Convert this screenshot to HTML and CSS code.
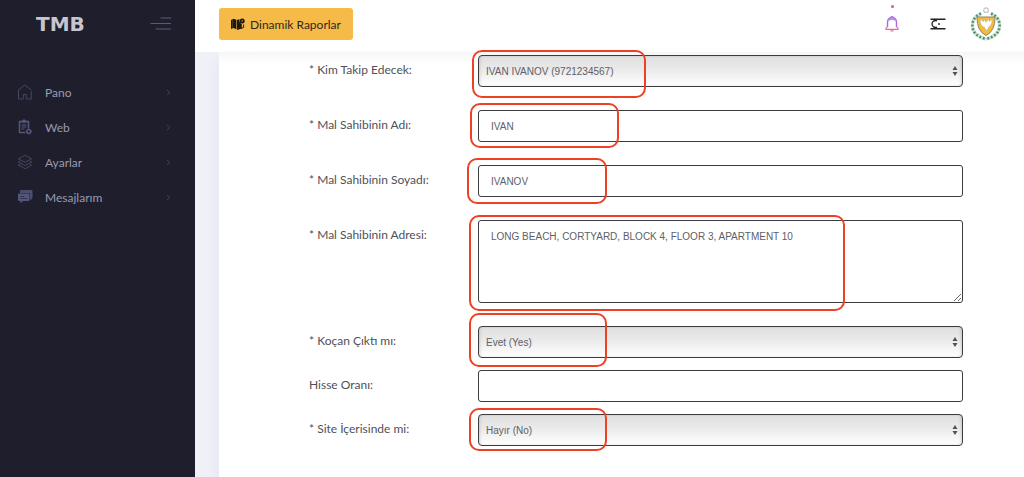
FILE: index.html
```html
<!DOCTYPE html>
<html lang="tr">
<head>
<meta charset="utf-8">
<meta name="viewport" content="width=device-width, initial-scale=1">
<title>TMB</title>
<link rel="stylesheet" href="styles.css">
</head>
<body>
<div class="app">
  <aside class="sidebar">
    <div class="brand">
      <a class="logo" href="#">TMB</a>
      <button class="toggle" type="button" aria-label="Menü">
        <svg width="22" height="14" viewBox="0 0 22 14" fill="none" stroke="#4a4a63" stroke-width="1.4"><path d="M10.500 1H21"/><path d="M.5 6.500H21" stroke="#5a5a74" stroke-width="1"/><path d="M5.500 12H21"/></svg>
      </button>
    </div>
    <nav class="nav">
      <a class="nav-item" href="#">
        <svg class="nav-icon" viewBox="0 0 16 16" fill="none" stroke="#45465f" stroke-width="1"><path d="M1.500 6v9h4.800v-4.500h3V15h5V7.500M1 6.300 7.800 1l6.700 5.300"/></svg>
        <span class="nav-text">Pano</span>
        <svg class="chevron" viewBox="0 0 5 7" fill="none" stroke="#45465f" stroke-width="1"><path d="m1 .8 2.700 2.700L1 6.200"/></svg>
      </a>
      <a class="nav-item" href="#">
        <svg class="nav-icon" viewBox="0 0 16 16" fill="none" stroke="#55577a"><path d="M8.500 13.500h-6v-11h9v7" stroke-width="1.500"/><path d="M4.500 1.500h5v2.200h-5z" fill="#55577a" stroke="none"/><path d="M6 .6h2v2H6z" fill="#55577a" stroke="none"/><path d="M4.500 6h5M4.500 8h5M4.500 10h3" stroke-width="1.100"/><circle cx="11.800" cy="12.400" r="1.900" stroke-width="1.400"/><path d="M11.800 9.500v1M11.800 14.500v1M8.900 12.400h1M13.900 12.400h1"/></svg>
        <span class="nav-text">Web</span>
        <svg class="chevron" viewBox="0 0 5 7" fill="none" stroke="#45465f" stroke-width="1"><path d="m1 .8 2.700 2.700L1 6.200"/></svg>
      </a>
      <a class="nav-item" href="#">
        <svg class="nav-icon" viewBox="0 0 16 16" fill="none" stroke="#484963" stroke-width=".9" stroke-linejoin="round"><path d="m8 1.300 6.700 3.500L8 8.300 1.300 4.800z"/><path d="M3.300 7 1.300 8 8 11.500 14.700 8l-2-1"/><path d="m3.300 10.200-2 1L8 14.700l6.700-3.500-2-1"/></svg>
        <span class="nav-text">Ayarlar</span>
        <svg class="chevron" viewBox="0 0 5 7" fill="none" stroke="#45465f" stroke-width="1"><path d="m1 .8 2.700 2.700L1 6.200"/></svg>
      </a>
      <a class="nav-item" href="#">
        <svg class="nav-icon" viewBox="0 0 16 16"><path d="M4 1h10.500q1 0 1 1v6.500q0 1-1 1v2L13 10V5q0-1-1-1H3V2q0-1 1-1z" fill="#4c4e70"/><path d="M2 4.500h9.500q1 0 1 1V11q0 1-1 1H6l-2.500 2.500V12H2q-1 0-1-1V5.500q0-1 1-1z" fill="#55577a"/><path d="M3.200 7.500h4M3.200 9.500h7" stroke="#33344c"/></svg>
        <span class="nav-text">Mesajlarım</span>
        <svg class="chevron" viewBox="0 0 5 7" fill="none" stroke="#45465f" stroke-width="1"><path d="m1 .8 2.700 2.700L1 6.200"/></svg>
      </a>
    </nav>
  </aside>

  <div class="main">
    <header class="topbar">
      <button class="reports" type="button">
        <svg width="14" height="12" viewBox="0 0 14 12"><path d="M0 2 1.800.9v9.300L0 11zM2.400.8l3 1v9.400l-3-1.200zM6 1.900l2.300-.9q-.3 3.800 2.500 5V10.400L6 12z" fill="#1d1a14"/><path d="M2 1h1v9H2z" fill="#1d1a14"/><circle cx="11.200" cy="2.900" r="2.500" fill="#1d1a14"/><circle cx="11.200" cy="2.900" r=".8" fill="#a77926"/><path d="M12.600 6.500v3l-2.400 1" stroke="#1d1a14" fill="none"/></svg>
        Dinamik Raporlar
      </button>
      <div class="actions">
        <button class="icon-button bell" type="button" aria-label="Bildirimler">
          <svg width="14" height="16" viewBox="0 0 14 16" fill="none"><path d="M2.500 11V6.500Q2.800 2.500 5.500 1.800q1.500-2 3 0 2.700.7 3 4.700V11" stroke="#a36be6" stroke-width="1.400"/><path d="M3.800 4.200Q7 1.200 10.200 4.200" stroke="#b98cf0" stroke-width="1.800"/><path d="M2.500 10.500 1 12.500v.8h12v-.8l-1.500-2" stroke="#e56d9c" stroke-width="1.200"/><path d="M5.500 14.500q1.500 1 3 0" stroke="#ee6f92" stroke-width="1.200"/></svg>
          <span class="dot"></span>
        </button>
        <button class="icon-button" type="button" aria-label="Dil">
          <svg width="16" height="12" viewBox="0 0 16 12" fill="none" stroke="#222"><path d="M.5 1.200h15M.5 10.800h15" stroke-width="1.400"/><path d="M7 3Q5.300 1.900 3.600 3.100 2 4.300 2 6t1.600 2.900Q5.300 10.100 7 9" stroke-width="1.300"/><circle cx="9" cy="6" r=".9" fill="#222" stroke="none"/></svg>
        </button>
        <button class="icon-button" type="button" aria-label="Profil">
          <svg width="32" height="36" viewBox="0 0 32 36" fill="none"><circle cx="16" cy="4.200" r="2.300" stroke="#c4c4c4" stroke-width="1.200"/><path d="M11 7.500Q1.500 12 2.500 21T16 33" stroke="#d3e5d9" stroke-width="3.400"/><path d="M21 7.500q9.500 4.500 8.500 13.500T16 33" stroke="#d3e5d9" stroke-width="3.400"/><path d="M11 7.500Q1.500 12 2.500 21T16 33" stroke="#4f8f69" stroke-width="2.600" stroke-dasharray="1.800 1.900"/><path d="M21 7.500q9.500 4.500 8.500 13.500T16 33" stroke="#4f8f69" stroke-width="2.600" stroke-dasharray="1.800 1.900"/><path d="M7 11h18q.3 14-9 18.500Q6.700 25 7 11z" fill="#f0bd3d" stroke="#8f8760"/><path d="m10 13 3.500 2.500.5-2.500 2 3.200 3-3.700v3l3-2.500q.5 5.500-3 8L16.500 25l-2-3.500Q10 20 10 13z" fill="#fff" stroke="#b3a679" stroke-width=".5"/></svg>
        </button>
      </div>
    </header>

    <main class="content">
      <form class="panel">
        <div class="row">
          <label for="takip">* Kim Takip Edecek:</label>
          <div class="field">
            <select id="takip"><option>IVAN IVANOV (9721234567)</option></select>
            <svg class="arrows" viewBox="0 0 6 10"><path d="M3 0l2.500 4H.5zM3 10 .5 6h5z" fill="#50505a"/></svg>
            <span class="mark mark-person"></span>
          </div>
        </div>
        <div class="row">
          <label for="adi">* Mal Sahibinin Adı:</label>
          <div class="field"><input id="adi" type="text" value="IVAN"><span class="mark mark-name"></span></div>
        </div>
        <div class="row">
          <label for="soyadi">* Mal Sahibinin Soyadı:</label>
          <div class="field"><input id="soyadi" type="text" value="IVANOV"><span class="mark mark-surname"></span></div>
        </div>
        <div class="row">
          <label for="adres">* Mal Sahibinin Adresi:</label>
          <div class="field"><textarea id="adres">LONG BEACH, CORTYARD, BLOCK 4, FLOOR 3, APARTMENT 10</textarea><span class="mark mark-address"></span></div>
        </div>
        <div class="group">
          <div class="row">
            <label for="kocan">* Koçan Çıktı mı:</label>
            <div class="field">
              <select id="kocan"><option>Evet (Yes)</option></select>
              <svg class="arrows" viewBox="0 0 6 10"><path d="M3 0l2.500 4H.5zM3 10 .5 6h5z" fill="#50505a"/></svg>
              <span class="mark mark-deed"></span>
            </div>
          </div>
          <div class="row">
            <label for="hisse">Hisse Oranı:</label>
            <div class="field"><input id="hisse" type="text"></div>
          </div>
          <div class="row">
            <label for="site">* Site İçerisinde mi:</label>
            <div class="field">
              <select id="site"><option>Hayır (No)</option></select>
              <svg class="arrows" viewBox="0 0 6 10"><path d="M3 0l2.500 4H.5zM3 10 .5 6h5z" fill="#50505a"/></svg>
              <span class="mark mark-site"></span>
            </div>
          </div>
        </div>
      </form>
    </main>
  </div>
</div>
</body>
</html>
```
FILE: styles.css
```css
* { box-sizing: border-box; }

body {
  margin: 0;
  font-family: Lato, "Noto Sans", sans-serif;
  font-size: 12px;
  color: #505058;
  background: #f0f1f7;
}

button { border: 0; padding: 0; background: none; font: inherit; cursor: pointer; }
svg { display: block; }

.app { display: flex; min-height: 100vh; }

.sidebar { flex: 0 0 195px; background: #1f1e2c; }
.brand {
  display: flex;
  align-items: center;
  justify-content: space-between;
  height: 48px;
  padding: 0 23px 0 36px;
}
.logo {
  font-family: "DejaVu Sans", sans-serif;
  font-weight: 700;
  font-size: 20px;
  line-height: 24px;
  color: #c6c6d0;
  text-decoration: none;
}

.nav { display: flex; flex-direction: column; gap: 3px; padding: 28px 24px 0 17px; }
.nav-item {
  display: flex;
  align-items: center;
  height: 32px;
  color: #9a9bb0;
  text-decoration: none;
}
.nav-icon { width: 16px; height: 16px; margin-right: 12px; }
.nav-text { flex: 1; }
.chevron { width: 5px; height: 7px; }

.main { flex: 1; min-width: 0; display: flex; flex-direction: column; }
.topbar {
  display: flex;
  align-items: center;
  justify-content: space-between;
  height: 52px;
  padding: 0 22px 4px 24px;
  background: #fff;
}
.reports {
  display: flex;
  align-items: center;
  gap: 5px;
  height: 32px;
  padding: 0 12px;
  border-radius: 3px;
  background: #f5ba48;
  color: #2d281d;
}
.actions { display: flex; align-items: center; }
.icon-button + .icon-button { margin-left: 24px; }
.bell { position: relative; }
.icon-button.bell + .icon-button { margin-left: 31px; }
.dot {
  position: absolute;
  top: -11px;
  left: 6px;
  width: 3px;
  height: 3px;
  border-radius: 50%;
  background: #ec5470;
}

.content { flex: 1; display: flex; padding-left: 24px; }
.panel {
  flex: 1;
  display: flex;
  flex-direction: column;
  gap: 23px;
  padding: 3px 61px 31px 90px;
  background: linear-gradient(#f6f6f8, #fff 12px);
  box-shadow: 0 8px 14px rgba(70, 70, 110, .08);
}
.group { display: flex; flex-direction: column; gap: 12px; }
.row { display: grid; grid-template-columns: 169px minmax(0, 1fr); align-items: start; }
.row label { padding-top: 7px; line-height: 16px; }
.field { position: relative; display: flex; }

input, select, textarea {
  width: 100%;
  height: 32px;
  margin: 0;
  padding: 0 12px;
  border: 1px solid #3c3c3e;
  border-radius: 3px;
  background: #fff;
  color: #606068;
  font-family: "Liberation Sans", Arial, sans-serif;
  font-size: 10px;
}
textarea { height: 83px; padding-top: 9px; line-height: 13px; resize: vertical; }
select {
  appearance: none;
  padding: 0 7px;
  border-radius: 4px;
  background: linear-gradient(#dfdfdf, #eaeaea 45%, #fff);
  box-shadow: inset 2px 0 3px -1px rgba(0, 0, 0, .14), inset -2px 0 3px -1px rgba(0, 0, 0, .14);
}
.arrows { position: absolute; right: 5px; top: 11px; width: 6px; height: 10px; pointer-events: none; }

.mark {
  position: absolute;
  z-index: 1;
  border: 2px solid #ee4023;
  border-radius: 10px;
  pointer-events: none;
}
.mark-person { left: -6px; top: -5px; width: 174px; height: 48px; }
.mark-name { left: -8px; top: -7px; width: 149px; height: 45px; }
.mark-surname { left: -11px; top: -7px; width: 140px; height: 46px; }
.mark-address { left: -9px; top: -5px; width: 376px; height: 96px; }
.mark-deed { left: -9px; top: -13px; width: 138px; height: 54px; }
.mark-site { left: -9px; top: -6px; width: 138px; height: 43px; }
```
